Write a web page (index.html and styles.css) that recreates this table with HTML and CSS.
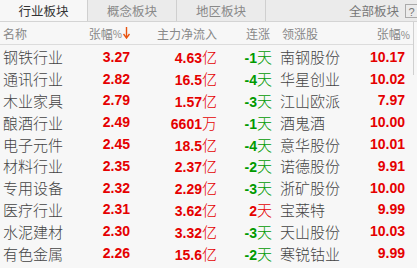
FILE: index.html
```html
<!DOCTYPE html>
<html lang="zh">
<head>
<meta charset="utf-8">
<link rel="stylesheet" href="styles.css">
</head>
<body>
<div class="app">
  <div class="tabs">
    <div class="tab active">行业板块</div>
    <div class="tab">概念板块</div>
    <div class="tab">地区板块</div>
    <div class="tab-spacer"></div>
    <div class="tab-all">全部板块</div>
    <div class="help">?</div>
  </div>
  <div class="main">
    <div class="table">
      <div class="head">
        <div class="c-name">名称</div>
        <div class="c-pct">张幅<span class="pc">%</span><svg class="arrow" width="7" height="12" viewBox="0 0 7 12"><path d="M3.5 0V10" stroke="#e8520f" stroke-width="1.4"/><path d="M0.5 7L3.5 11L6.5 7" fill="none" stroke="#e8520f" stroke-width="1.4"/></svg></div>
        <div class="c-flow">主力净流入</div>
        <div class="c-days">连涨</div>
        <div class="c-stock">领涨股</div>
        <div class="c-spct h-spct">张幅<span class="pc">%</span></div>
      </div>
      <div class="rows">
        <div class="row"><div class="c-name">钢铁行业</div><div class="c-pct num">3.27</div><div class="c-flow red"><span class="num">4.63</span>亿</div><div class="c-days"><span class="num green">-1</span><span class="green">天</span></div><div class="c-stock">南钢股份</div><div class="c-spct num">10.17</div></div>
        <div class="row"><div class="c-name">通讯行业</div><div class="c-pct num">2.82</div><div class="c-flow red"><span class="num">16.5</span>亿</div><div class="c-days"><span class="num green">-4</span><span class="green">天</span></div><div class="c-stock">华星创业</div><div class="c-spct num">10.02</div></div>
        <div class="row"><div class="c-name">木业家具</div><div class="c-pct num">2.79</div><div class="c-flow red"><span class="num">1.57</span>亿</div><div class="c-days"><span class="num green">-3</span><span class="green">天</span></div><div class="c-stock">江山欧派</div><div class="c-spct num">7.97</div></div>
        <div class="row"><div class="c-name">酿酒行业</div><div class="c-pct num">2.49</div><div class="c-flow red"><span class="num">6601</span>万</div><div class="c-days"><span class="num green">-1</span><span class="green">天</span></div><div class="c-stock">酒鬼酒</div><div class="c-spct num">10.00</div></div>
        <div class="row"><div class="c-name">电子元件</div><div class="c-pct num">2.45</div><div class="c-flow red"><span class="num">18.5</span>亿</div><div class="c-days"><span class="num green">-4</span><span class="green">天</span></div><div class="c-stock">意华股份</div><div class="c-spct num">10.01</div></div>
        <div class="row"><div class="c-name">材料行业</div><div class="c-pct num">2.35</div><div class="c-flow red"><span class="num">2.37</span>亿</div><div class="c-days"><span class="num green">-2</span><span class="green">天</span></div><div class="c-stock">诺德股份</div><div class="c-spct num">9.91</div></div>
        <div class="row"><div class="c-name">专用设备</div><div class="c-pct num">2.32</div><div class="c-flow red"><span class="num">2.29</span>亿</div><div class="c-days"><span class="num green">-3</span><span class="green">天</span></div><div class="c-stock">浙矿股份</div><div class="c-spct num">10.00</div></div>
        <div class="row"><div class="c-name">医疗行业</div><div class="c-pct num">2.31</div><div class="c-flow red"><span class="num">3.62</span>亿</div><div class="c-days"><span class="num red">2</span><span class="red">天</span></div><div class="c-stock">宝莱特</div><div class="c-spct num">9.99</div></div>
        <div class="row"><div class="c-name">水泥建材</div><div class="c-pct num">2.30</div><div class="c-flow red"><span class="num">3.32</span>亿</div><div class="c-days"><span class="num green">-3</span><span class="green">天</span></div><div class="c-stock">天山股份</div><div class="c-spct num">10.03</div></div>
        <div class="row"><div class="c-name">有色金属</div><div class="c-pct num">2.26</div><div class="c-flow red"><span class="num">15.6</span>亿</div><div class="c-days"><span class="num green">-2</span><span class="green">天</span></div><div class="c-stock">寒锐钴业</div><div class="c-spct num">9.99</div></div>
      </div>
    </div>
    <div class="scroll"><div class="thumb"></div></div>
  </div>
</div>
</body>
</html>
```

FILE: styles.css
```css
html, body {
  margin: 0;
  padding: 0;
}
body {
  width: 417px;
  height: 268px;
  overflow: hidden;
  background: #f7f7f7;
  font-family: "Noto Sans CJK SC", "Liberation Sans", sans-serif;
}
.app {
  display: flex;
  flex-direction: column;
}
.tabs {
  display: flex;
  align-items: center;
  height: 21px;
  background: #ebebeb;
  border-bottom: 1px solid #d4d4d4;
  font-size: 12.5px;
  color: #555;
}
.tab {
  width: 89px;
  height: 21px;
  line-height: 21px;
  text-align: center;
  border-right: 1px solid #cfcfcf;
  box-sizing: border-box;
  color: #888;
}
.tab.active {
  width: 88px;
  background: #f7f7f7;
  color: #333;
}
.tab-spacer { flex: 1; }
.tab-all {
  color: #777;
  margin-right: 6px;
}
.help {
  width: 12px;
  height: 14px;
  line-height: 14px;
  box-sizing: border-box;
  border: 1px solid #aaa;
  border-right: none;
  font-size: 11px;
  text-align: center;
  color: #777;
  font-family: "Liberation Sans", sans-serif;
}
.main {
  display: flex;
}
.table {
  width: 413px;
}
.scroll {
  flex: 1;
}
.thumb {
  height: 53px;
  border-left: 1px solid #d0d0d0;
}
.head, .row {
  display: grid;
  grid-template-columns: 78px 53px 86px 56px 78px 62px;
  align-items: center;
}
.head {
  height: 22px;
  border-bottom: 1px solid #dcdcdc;
  font-size: 12px;
  color: #888;
}
.rows {
  padding-top: 1px;
}
.row {
  height: 21.8px;
  font-size: 15px;
  font-weight: 300;
  color: #444;
}
.c-name { padding-left: 3px; white-space: nowrap; }
.c-pct, .c-flow, .c-days, .c-spct {
  text-align: right;
  white-space: nowrap;
}
.c-pct { padding-right: 1px; display: flex; justify-content: flex-end; align-items: center; }
.row .c-pct { display: block; }
.c-days { padding-right: 1px; }
.head .c-days { padding-right: 3px; }
.c-stock { padding-left: 7px; white-space: nowrap; }
.head .c-stock { padding-left: 9px; }
.c-spct { padding-right: 8px; }
.head .h-spct { padding-right: 3px; }
.pc { font-size: 10px; }
.arrow { margin-left: 1px; }
.num {
  font-family: "Liberation Sans", sans-serif;
  font-weight: bold;
  font-size: 14px;
  color: #e50000;
}
.red { color: #e50000; }
.green { color: #009a00; }
.num.green { color: #009a00; }
```
